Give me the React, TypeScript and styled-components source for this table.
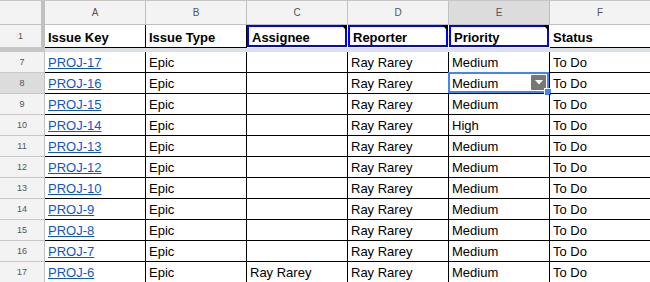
import styled, { createGlobalStyle, css } from 'styled-components';

const GlobalStyle = createGlobalStyle`
  html, body {
    margin: 0;
    padding: 0;
    background: #fff;
    overflow: hidden;
  }
  body {
    font-family: "Liberation Sans", Arial, sans-serif;
  }
`;

const COLS = ['A', 'B', 'C', 'D', 'E', 'F'];
const GRID = '45px repeat(6, 101px)';

interface Issue {
  key: string;
  type: string;
  assignee: string;
  reporter: string;
  priority: string;
  status: string;
}

const issues: Issue[] = [17, 16, 15, 14, 13, 12, 10, 9, 8, 7, 6].map((n) => ({
  key: `PROJ-${n}`,
  type: 'Epic',
  assignee: n === 6 ? 'Ray Rarey' : '',
  reporter: 'Ray Rarey',
  priority: n === 14 ? 'High' : 'Medium',
  status: 'To Do',
}));

const rowNumbers = [7, 8, 9, 10, 11, 12, 13, 14, 15, 16, 17];

const Sheet = styled.div`
  width: 650px;
  height: 282px;
  overflow: hidden;
  display: flex;
  flex-direction: column;
`;

const Row = styled.div`
  display: grid;
  grid-template-columns: ${GRID};
  flex-shrink: 0;
`;

const HeaderRow = styled(Row)`
  border-top: 1px solid #c6c6c6;
  height: 24px;
`;

const Corner = styled.div`
  background: #f3f3f3;
  border-right: 4px solid #c0c0c0;
  border-bottom: 1px solid #c0c0c0;
`;

const ColHead = styled.div<{ $active?: boolean }>`
  background: ${({ $active }) => ($active ? '#dcdcdc' : '#f3f3f3')};
  border-right: 1px solid #c0c0c0;
  border-bottom: 1px solid #c0c0c0;
  display: flex;
  align-items: center;
  justify-content: center;
  font-size: 10px;
  color: #555;
`;

const RowHead = styled.div<{ $frozen?: boolean; $active?: boolean }>`
  background: ${({ $active }) => ($active ? '#dcdcdc' : '#f3f3f3')};
  border-bottom: 1px solid #c8c8c8;
  border-right: ${({ $frozen }) => ($frozen ? '4px solid #c0c0c0' : '1px solid #c0c0c0')};
  display: flex;
  align-items: center;
  justify-content: center;
  font-size: 9px;
  color: #555;
`;

const Cell = styled.div<{ $bold?: boolean; $marked?: boolean }>`
  position: relative;
  border-right: 1px solid #000;
  border-bottom: 1px solid #000;
  display: flex;
  align-items: flex-end;
  padding: 0 3px 2px;
  font-size: 13px;
  line-height: 15px;
  color: #000;
  white-space: nowrap;
  ${({ $bold }) =>
    $bold &&
    css`
      font-weight: 700;
    `}
  ${({ $marked }) =>
    $marked &&
    css`
      padding-left: 5px;
      border-right-color: #fff;
      border-bottom-color: #fff;
      box-shadow: inset 0 0 0 2px #0000ff;
    `}
`;

const TitleRow = styled(Row)`
  height: 23px;
`;

const DataRow = styled(Row)`
  height: 21px;
`;

const Band = styled.div`
  display: flex;
  height: 4px;
  flex-shrink: 0;
`;

const BandGutter = styled.div`
  width: 45px;
  background: #c6c6c6;
`;

const BandRest = styled.div`
  flex: 1;
  background: #dde0e5;
`;

const Link = styled.a`
  color: #1155cc;
  text-decoration: underline;
`;

const NoteMark = styled.span`
  position: absolute;
  top: 0;
  right: 0;
  width: 0;
  height: 0;
  border-top: 6px solid #000;
  border-left: 6px solid transparent;
`;

const Selection = styled.div`
  position: absolute;
  top: -1px;
  left: -1px;
  right: 0;
  bottom: 0;
  border: 2px solid #4285f4;
  pointer-events: none;
`;

const Handle = styled.div`
  position: absolute;
  right: -4px;
  bottom: -4px;
  width: 6px;
  height: 6px;
  background: #4285f4;
  border: 1px solid #fff;
  border-right: none;
  border-bottom: none;
`;

const DropButton = styled.div`
  position: absolute;
  top: 2px;
  right: 3px;
  width: 15px;
  height: 15px;
  background: #777;
  border-radius: 1px;
  display: flex;
  align-items: center;
  justify-content: center;
`;

export default function App() {
  return (
    <>
      <GlobalStyle />
      <Sheet>
        <HeaderRow>
          <Corner />
          {COLS.map((c) => (
            <ColHead key={c} $active={c === 'E'}>
              {c}
            </ColHead>
          ))}
        </HeaderRow>

        <TitleRow>
          <RowHead $frozen>1</RowHead>
          <Cell $bold>Issue Key</Cell>
          <Cell $bold>Issue Type</Cell>
          <Cell $bold $marked>
            Assignee
            <NoteMark />
          </Cell>
          <Cell $bold $marked>
            Reporter
            <NoteMark />
          </Cell>
          <Cell $bold $marked>
            Priority
            <NoteMark />
          </Cell>
          <Cell $bold>Status</Cell>
        </TitleRow>

        <Band>
          <BandGutter />
          <BandRest />
        </Band>

        {issues.map((it, i) => {
          const selected = rowNumbers[i] === 8;
          return (
            <DataRow key={it.key}>
              <RowHead $active={selected}>{rowNumbers[i]}</RowHead>
              <Cell>
                <Link href="#">{it.key}</Link>
              </Cell>
              <Cell>{it.type}</Cell>
              <Cell>{it.assignee}</Cell>
              <Cell>{it.reporter}</Cell>
              <Cell>
                {it.priority}
                {selected && (
                  <>
                    <DropButton>
                      <svg width="8" height="5" viewBox="0 0 8 5">
                        <path d="M0 0 H8 L4 4.5 Z" fill="#fff" />
                      </svg>
                    </DropButton>
                    <Selection>
                      <Handle />
                    </Selection>
                  </>
                )}
              </Cell>
              <Cell>{it.status}</Cell>
            </DataRow>
          );
        })}
      </Sheet>
    </>
  );
}
